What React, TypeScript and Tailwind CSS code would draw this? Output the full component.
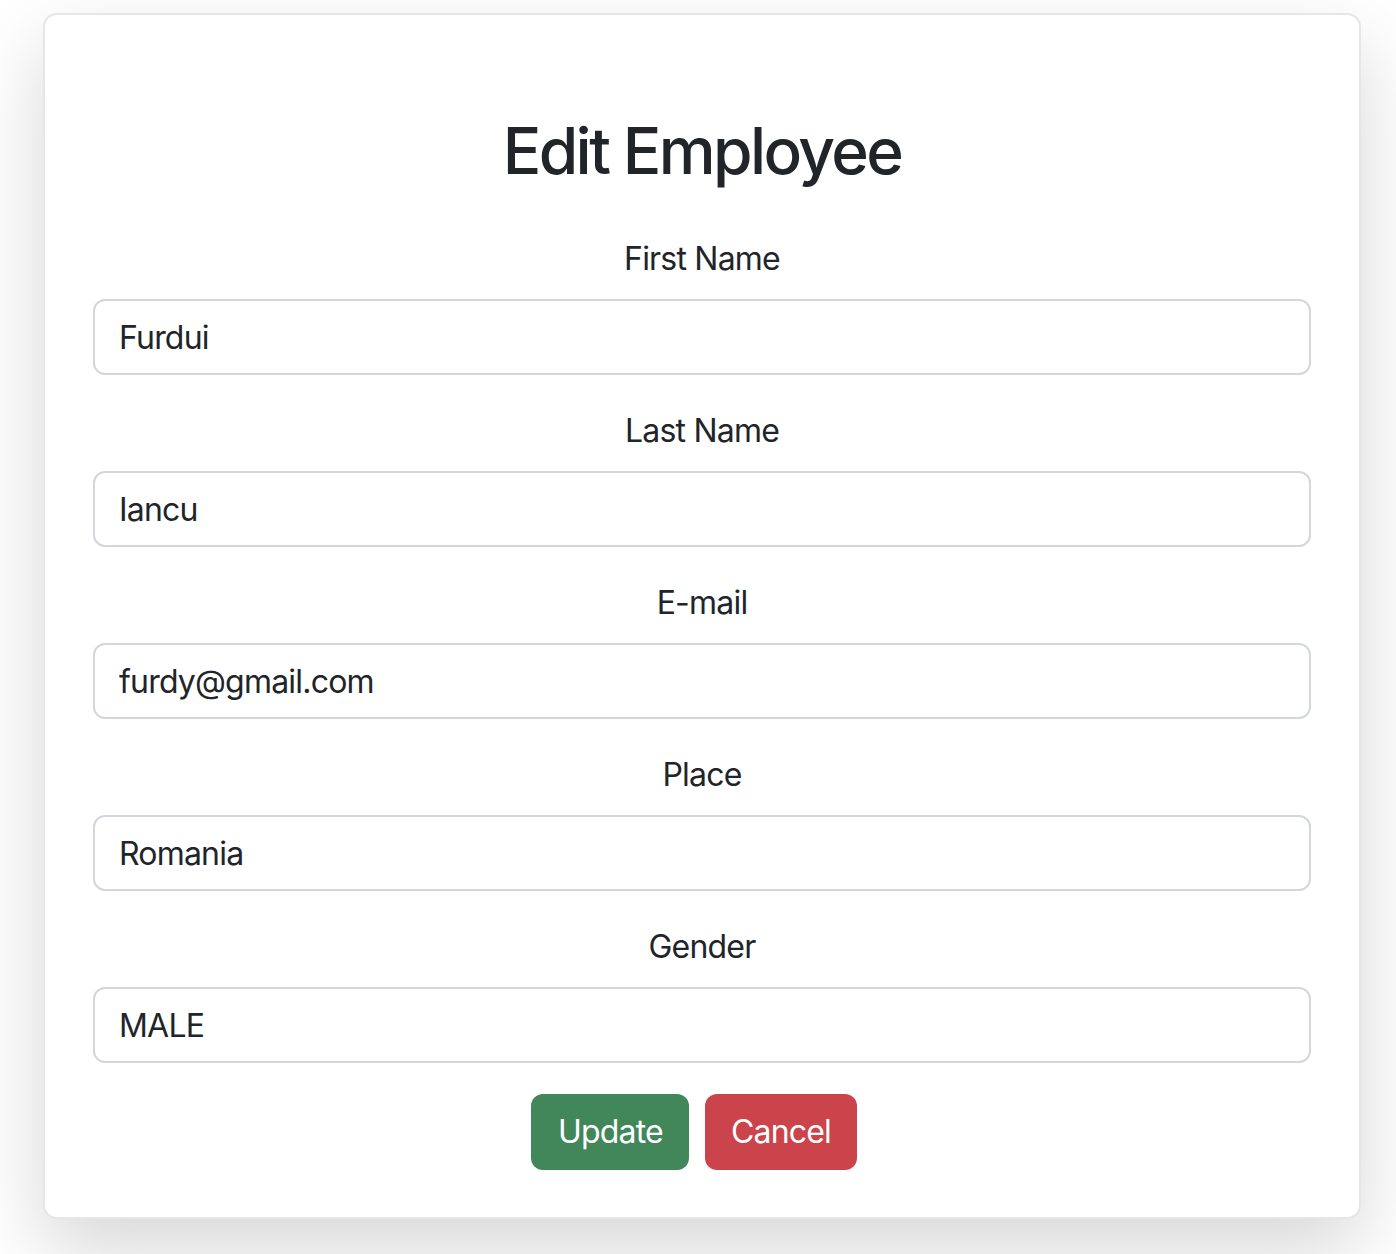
const fields = [
  { label: "First Name", value: "Furdui" },
  { label: "Last Name", value: "Iancu" },
  { label: "E-mail", value: "furdy@gmail.com" },
  { label: "Place", value: "Romania" },
  { label: "Gender", value: "MALE" },
];

export default function App() {
  return (
    <div className="min-h-screen bg-white font-['Inter',sans-serif] text-[#212529]">
      <div className="pl-[43px] pt-[13px]">
        <div className="w-[1318px] rounded-[14px] border-2 border-[#e4e6ea] bg-white px-[48px] pt-[97px] pb-[47px] shadow-[0_32px_80px_rgba(0,0,0,0.16)]">
          <h2 className="mb-[46px] text-center text-[64px] leading-[77px] font-medium tracking-[-2.6px]">
            Edit Employee
          </h2>
          <form className="flex flex-col">
            {fields.map((f) => (
              <div key={f.label} className="mb-[32px] flex flex-col">
                <label className="mb-[16px] text-center text-[32px] leading-[48px] tracking-[-0.8px]">
                  {f.label}
                </label>
                <input
                  defaultValue={f.value}
                  className="h-[76px] w-full rounded-[12px] border-2 border-[#d3d7db] bg-white px-[24px] text-[32px] tracking-[-0.8px] text-[#212529] outline-none"
                />
              </div>
            ))}
            <div className="-mt-[1px] flex justify-center gap-[16px] pr-[16px]">
              <button
                type="button"
                className="h-[76px] rounded-[12px] bg-[#418759] px-[26.5px] text-[32px] tracking-[-0.8px] text-white"
              >
                Update
              </button>
              <button
                type="button"
                className="h-[76px] rounded-[12px] bg-[#cb444b] px-[25.5px] text-[32px] tracking-[-0.8px] text-white"
              >
                Cancel
              </button>
            </div>
          </form>
        </div>
      </div>
    </div>
  );
}
